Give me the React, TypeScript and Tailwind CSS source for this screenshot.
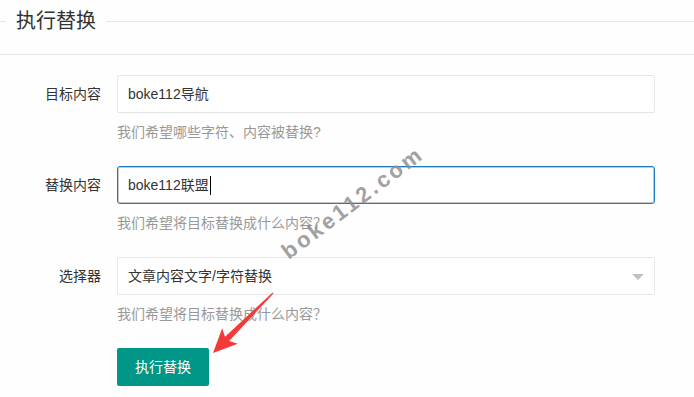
const font = { fontFamily: '"Liberation Sans", "Noto Sans CJK SC", sans-serif' };

function Row({
  label,
  help,
  children,
}: {
  label: string;
  help: string;
  children: React.ReactNode;
}) {
  return (
    <div className="flex flex-col">
      <div className="flex items-center">
        <label className="w-[117px] pr-[16px] text-right text-[14px] text-[#333]">
          {label}
        </label>
        <div className="w-[538px]">{children}</div>
      </div>
      <p className="ml-[117px] mt-[8px] h-[22px] leading-[22px] text-[14px] text-[#999]">
        {help}
      </p>
    </div>
  );
}

export default function App() {
  return (
    <div className="relative w-[694px] h-[397px] overflow-hidden bg-[#fefefe]" style={font}>
      {/* Fieldset title */}
      <div className="flex items-center h-[42px]">
        <div className="w-[6px] h-px bg-[#e6e6e6]" />
        <span className="px-[10px] text-[20px] text-[#333] leading-[42px]">执行替换</span>
        <div className="flex-1 h-px bg-[#e6e6e6]" />
      </div>
      <div className="mt-[12px] h-px bg-[#e6e6e6]" />

      <div className="flex flex-col gap-[23px] pt-[20px]">
        <Row label="目标内容" help="我们希望哪些字符、内容被替换?">
          <div className="h-[38px] flex items-center px-[10px] border border-[#e6e6e6] rounded-[2px] bg-white text-[14px] text-[#333]">
            boke112导航
          </div>
        </Row>
        <Row label="替换内容" help="我们希望将目标替换成什么内容？">
          <div className="h-[38px] flex items-center px-[10px] border border-[#1b7cc1] rounded-[3px] bg-white text-[14px] text-[#333] shadow-[inset_0_0_0_1px_#c8c8c8]">
            boke112联盟
            <span className="ml-px w-px h-[19px] bg-black" />
          </div>
        </Row>
        <Row label="选择器" help="我们希望将目标替换成什么内容？">
          <div className="relative h-[38px] flex items-center px-[10px] border border-[#e6e6e6] rounded-[2px] bg-white text-[14px] text-[#333]">
            文章内容文字/字符替换
            <span className="absolute right-[10px] top-[16px] w-0 h-0 border-x-[6px] border-x-transparent border-t-[6px] border-t-[#c2c2c2]" />
          </div>
        </Row>
      </div>

      <div className="ml-[117px] mt-[23px]">
        <button className="h-[38px] px-[18px] rounded-[2px] bg-[#009688] text-white text-[14px]">
          执行替换
        </button>
      </div>

      {/* watermark */}
      <div
        className="absolute left-[267px] top-[186px] text-[22px] font-semibold tracking-[3px] text-[#8a8a8a] opacity-80 -rotate-[37deg] pointer-events-none"
        style={{ fontFamily: '"Liberation Sans", sans-serif' }}
      >
        boke112.com
      </div>

      {/* red arrow */}
      <svg className="absolute left-[200px] top-[285px]" width="90" height="80" viewBox="0 0 90 80">
        <polygon
          points="73.4,8.4 29.2,56 37.8,58.8 13,68 22.2,43.2 25,51.8 72.6,7.6"
          fill="#f23a3a"
        />
      </svg>
    </div>
  );
}
